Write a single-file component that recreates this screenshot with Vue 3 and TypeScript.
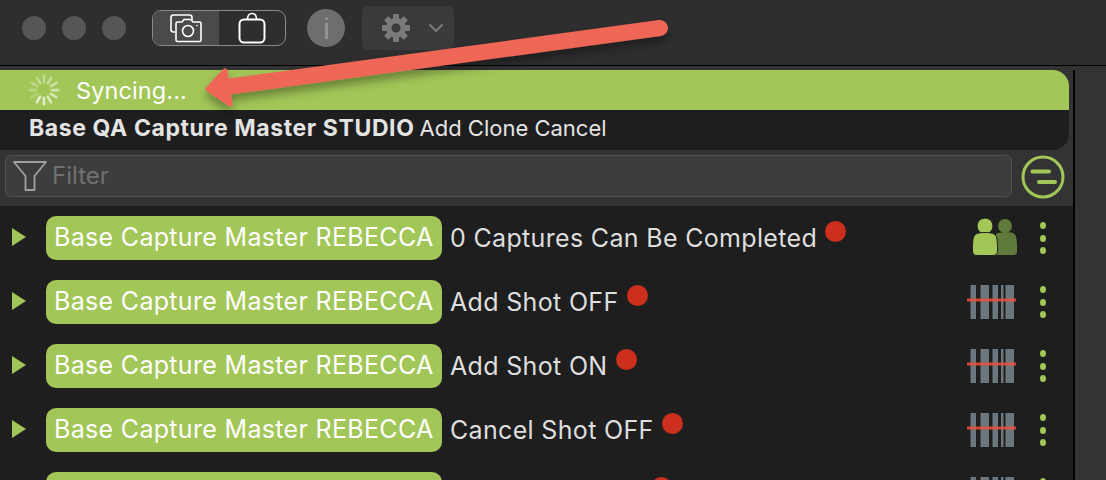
<template>
  <div class="app">
    <header class="titlebar">
      <div class="traffic">
        <span class="traffic__dot"></span>
        <span class="traffic__dot"></span>
        <span class="traffic__dot"></span>
      </div>
      <div class="segment">
        <div class="segment__item segment__item--on">
          <svg width="34" height="30" viewBox="0 0 34 30" fill="none" stroke="#fff" stroke-width="1.6" stroke-linejoin="round">
            <path d="M6 19H4.5A2.5 2.5 0 0 1 2 16.500V4.500A2.500 2.500 0 0 1 4.500 2H20.500A2.500 2.500 0 0 1 23 4.500V7" />
            <path d="M7 10.500A1.500 1.500 0 0 1 8.500 9H13L15 6.500H22L24 9H30.500A1.500 1.500 0 0 1 32 10.500V27A1.500 1.500 0 0 1 30.500 28.500H8.500A1.500 1.500 0 0 1 7 27Z" fill="#4a4a4a" />
            <circle cx="19" cy="18" r="5.500" />
            <circle cx="28" cy="12.500" r="0.800" fill="#fff" stroke="none" />
          </svg>
        </div>
        <div class="segment__item">
          <svg width="28" height="32" viewBox="0 0 28 32" fill="none" stroke="#fff" stroke-width="2" stroke-linejoin="round">
            <path d="M9.500 7.500C9.500 3.500 11 1.500 14 1.500S18.500 3.500 18.500 7.500" stroke-width="1.500" />
            <rect x="1.500" y="7.500" width="25" height="23" rx="4.500" />
          </svg>
        </div>
      </div>
      <div class="info"><span class="info__dot"></span><span class="info__stem"></span></div>
      <div class="gear-button">
        <svg width="30" height="30" viewBox="0 0 30 30">
          <g fill="#7a7a7a">
            <rect v-for="a in gearTeeth" :key="a" x="12" y="1" width="6" height="28" rx="1" :transform="`rotate(${a} 15 15)`" />
          </g>
          <circle cx="15" cy="15" r="10" fill="#7a7a7a" />
          <circle cx="15" cy="15" r="4.500" fill="#3a3a3a" />
        </svg>
        <svg width="16" height="10" viewBox="0 0 16 10" fill="none" stroke="#7a7a7a" stroke-width="2.200">
          <path d="M1.500 1.500L8 8L14.500 1.500" />
        </svg>
      </div>
    </header>

    <div class="body">
      <main class="main">
        <section class="panel">
          <div class="sync">
            <svg class="sync__spinner" width="34" height="34" viewBox="0 0 34 34">
              <rect
                v-for="(s, i) in spinnerBars"
                :key="i"
                x="15.800"
                y="1.500"
                width="2.600"
                height="9"
                rx="1.300"
                fill="#fff"
                :opacity="s.opacity"
                :transform="`rotate(${s.angle} 17 17)`"
              />
            </svg>
            <span>Syncing...</span>
          </div>
          <div class="panel__title">
            <strong>Base QA Capture Master STUDIO</strong>
            <span>Add Clone Cancel</span>
          </div>
        </section>

        <div class="filter">
          <div class="filter__box">
            <svg width="36" height="32" viewBox="0 0 36 32" fill="none" stroke="#a0a0a0" stroke-width="1.800" stroke-linejoin="round">
              <path d="M2 2H34L22.500 16V30H13.500V16Z" />
            </svg>
            <span class="filter__text">Filter</span>
          </div>
          <svg width="44" height="44" viewBox="0 0 44 44" fill="none" stroke="#a2c657" stroke-linecap="round">
            <circle cx="22" cy="22" r="20" stroke-width="3" />
            <path d="M11.500 16.500H28M18 27H34" stroke-width="4" />
          </svg>
        </div>

        <ul class="list">
          <li v-for="row in rows" :key="row.label" class="row">
            <span class="row__play"></span>
            <span class="row__pill">Base Capture Master REBECCA</span>
            <span class="row__label">{{ row.label }}</span>
            <span class="row__dot"></span>
            <div class="row__icon">
              <svg v-if="row.people" class="row__people" width="46" height="40" viewBox="0 0 46 40">
                <g fill="#5f7a3a">
                  <circle cx="33" cy="8" r="7" />
                  <path d="M24 16C27 14 39 14 41 15C45 17 45 23 45 33C45 36 44 37 41 37H24Z" />
                </g>
                <g fill="#a2c657" stroke="#1e1e1e" stroke-width="1">
                  <circle cx="13" cy="8" r="8" />
                  <path d="M4 16C7 14 19 14 22 16C25.500 18 25.500 24 25.500 33C25.500 36 24 37.500 21 37.500H5C2 37.500 0.500 36 0.500 33C0.500 24 0.500 18 4 16Z" />
                </g>
              </svg>
              <svg v-else width="50" height="34" viewBox="0 0 50 34">
                <g fill="#6b777d">
                  <rect x="4.500" y="0" width="5.500" height="34" />
                  <rect x="14.500" y="0" width="8.500" height="34" />
                  <rect x="26.500" y="0" width="5.500" height="34" />
                  <rect x="35" y="0" width="2.500" height="34" />
                  <rect x="39.500" y="0" width="8.500" height="34" />
                </g>
                <rect x="1" y="13.500" width="49" height="3" fill="#f0503c" opacity="0.850" />
              </svg>
            </div>
            <div class="row__menu">
              <span></span><span></span><span></span>
            </div>
          </li>
        </ul>
      </main>
      <aside class="side"></aside>
    </div>

    <svg class="arrow" width="700" height="120" viewBox="0 0 700 120" fill="none">
      <defs>
        <filter id="arrow-shadow" x="-5%" y="-30%" width="110%" height="170%">
          <feDropShadow dx="0" dy="6" stdDeviation="5" flood-color="#000" flood-opacity="0.350" />
        </filter>
      </defs>
      <g filter="url(#arrow-shadow)" fill="#ee6656" stroke="#ee6656" stroke-linejoin="round" stroke-linecap="round">
        <path d="M660 28L226 87" stroke-width="16" />
        <path d="M208 89L225 71L230 104Z" stroke-width="5" />
      </g>
    </svg>
  </div>
</template>

<script setup lang="ts">
interface Row {
  label: string;
  people?: boolean;
}

const gearTeeth = [0, 45, 90, 135];

const spinnerBars = Array.from({ length: 12 }, (_, i) => ({
  angle: i * 30,
  opacity: 0.2 + ((i + 4) % 12) * 0.045
}));

const rows: Row[] = [
  { label: '0 Captures Can Be Completed', people: true },
  { label: 'Add Shot OFF' },
  { label: 'Add Shot ON' },
  { label: 'Cancel Shot OFF' },
  { label: 'Cancel Shot ON' }
];
</script>

<style>
html,
body {
  margin: 0;
  background: #333;
}
</style>

<style scoped>
.app {
  position: relative;
  width: 1106px;
  height: 480px;
  overflow: hidden;
  display: flex;
  flex-direction: column;
  background: #333;
  font-family: Inter, 'Liberation Sans', sans-serif;
}

.titlebar {
  height: 66px;
  flex: none;
  box-sizing: border-box;
  display: flex;
  align-items: flex-start;
  padding: 6px 0 0 22px;
  background: #2e2e2e;
  border-bottom: 1px solid #000;
}

.traffic {
  display: flex;
  gap: 16px;
  margin-top: 10px;
}

.traffic__dot {
  width: 24px;
  height: 24px;
  border-radius: 50%;
  background: #565656;
}

.segment {
  width: 134px;
  height: 36px;
  box-sizing: border-box;
  margin: 4px 0 0 26px;
  display: flex;
  border: 1.5px solid #8a8a8a;
  border-radius: 9px;
  overflow: hidden;
}

.segment__item {
  flex: 1;
  display: flex;
  align-items: center;
  justify-content: center;
}

.segment__item--on {
  background: #4a4a4a;
}

.info {
  width: 38px;
  height: 38px;
  margin: 3px 0 0 21px;
  border-radius: 50%;
  background: #6e6e6e;
  display: flex;
  flex-direction: column;
  align-items: center;
  padding-top: 8px;
  box-sizing: border-box;
  gap: 3px;
}

.info__dot {
  width: 3px;
  height: 3px;
  border-radius: 50%;
  background: #939393;
}

.info__stem {
  width: 3px;
  height: 16px;
  background: #939393;
}

.gear-button {
  width: 92px;
  height: 44px;
  margin-left: 17px;
  box-sizing: border-box;
  padding-left: 19px;
  display: flex;
  align-items: center;
  gap: 17px;
  border-radius: 6px;
  background: #3a3a3a;
}

.body {
  flex: 1;
  min-height: 0;
  display: flex;
}

.main {
  width: 1073px;
  flex: none;
  padding-top: 4px;
  display: flex;
  flex-direction: column;
}

.side {
  width: 33px;
  border-left: 2px solid #000;
  margin-top: 4px;
}

.panel {
  width: 1069px;
  height: 80px;
  flex: none;
  border-radius: 0 16px 16px 0;
  overflow: hidden;
  background: #1e1e1e;
}

.sync {
  height: 40px;
  display: flex;
  align-items: center;
  gap: 15px;
  padding-left: 27px;
  box-sizing: border-box;
  background: #a2c657;
  color: #fff;
  font-size: 23.5px;
  letter-spacing: 0.1px;
}

.panel__title {
  height: 40px;
  box-sizing: border-box;
  padding: 0 0 4px 29px;
  display: flex;
  align-items: center;
  gap: 5px;
  color: #e4e4e4;
  font-size: 22px;
}

.panel__title strong {
  font-weight: 700;
  font-size: 23px;
  letter-spacing: 0.6px;
}

.filter {
  height: 56px;
  flex: none;
  box-sizing: border-box;
  padding: 5px 8px 0 5px;
  display: flex;
  align-items: flex-start;
  justify-content: space-between;
}

.filter__box {
  width: 1007px;
  height: 42px;
  box-sizing: border-box;
  display: flex;
  align-items: center;
  gap: 4px;
  padding-left: 6px;
  background: #3d3d3d;
  border: 1px solid #505050;
  border-radius: 6px;
  color: #717171;
  font-size: 24px;
}

.filter__text {
  padding-bottom: 2px;
}

.list {
  flex: 1;
  margin: 0;
  padding: 10px 0 0;
  list-style: none;
  background: #1e1e1e;
}

.row {
  height: 44px;
  margin-bottom: 20px;
  display: flex;
  align-items: center;
  padding-left: 12px;
}

.row__play {
  width: 0;
  height: 0;
  border-style: solid;
  border-width: 9px 0 9px 14px;
  border-color: transparent transparent transparent #a2c657;
  margin-right: 20px;
  margin-top: -2px;
}

.row__pill {
  width: 396px;
  height: 44px;
  box-sizing: border-box;
  padding: 0 0 2px 8px;
  display: flex;
  align-items: center;
  border-radius: 10px;
  background: #a2c657;
  color: #fff;
  font-size: 25px;
  letter-spacing: 0.32px;
  white-space: nowrap;
}

.row__label {
  margin-left: 8px;
  color: #dedede;
  font-size: 25px;
  letter-spacing: 0.33px;
  white-space: nowrap;
}

.row__dot {
  width: 21px;
  height: 21px;
  margin: 0 0 14px 8px;
  border-radius: 50%;
  background: #cd2f1e;
}

.row__icon {
  margin-left: auto;
  display: flex;
  justify-content: flex-end;
  width: 50px;
}

.row__people {
  margin-right: -2px;
}

.row__menu {
  width: 57px;
  box-sizing: border-box;
  padding-right: 3px;
  display: flex;
  flex-direction: column;
  align-items: center;
  gap: 5.5px;
}

.row__menu span {
  width: 6px;
  height: 7px;
  border-radius: 50%;
  background: #a2c657;
}

.arrow {
  position: absolute;
  left: 0;
  top: 0;
  pointer-events: none;
}
</style>
